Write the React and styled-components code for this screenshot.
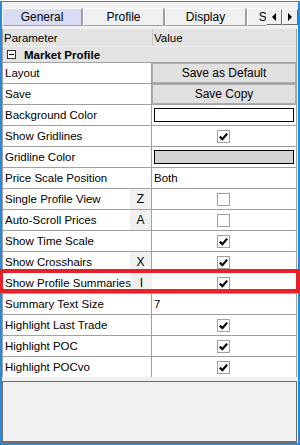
import React from "react";
import styled, { createGlobalStyle } from "styled-components";

const GlobalStyle = createGlobalStyle`
  html, body {
    margin: 0;
    padding: 0;
    background: #ffffff;
  }
  body {
    font-family: "Liberation Sans", Arial, sans-serif;
    font-size: 11.5px;
    color: #000000;
  }
`;

const rows = [
  { name: "Layout", kind: "button", value: "Save as Default" },
  { name: "Save", kind: "button", value: "Save Copy" },
  { name: "Background Color", kind: "color", value: "#ffffff" },
  { name: "Show Gridlines", kind: "check", value: true },
  { name: "Gridline Color", kind: "color", value: "#d4d4d4" },
  { name: "Price Scale Position", kind: "text", value: "Both" },
  { name: "Single Profile View", key: "Z", kind: "check", value: false },
  { name: "Auto-Scroll Prices", key: "A", kind: "check", value: false },
  { name: "Show Time Scale", kind: "check", value: true },
  { name: "Show Crosshairs", key: "X", kind: "check", value: true },
  { name: "Show Profile Summaries", key: "I", kind: "check", value: true },
  { name: "Summary Text Size", kind: "text", value: "7" },
  { name: "Highlight Last Trade", kind: "check", value: true },
  { name: "Highlight POC", kind: "check", value: true },
  { name: "Highlight POCvo", kind: "check", value: true },
];

const tabs = [
  { label: "General", width: 81, active: true },
  { label: "Profile", width: 82 },
  { label: "Display", width: 82 },
  { label: "Summary", width: 76 },
];

export default function App() {
  return (
    <>
      <GlobalStyle />
      <Window>
        <TabBar>
          <TabStrip>
            {tabs.map((t) => (
              <Tab key={t.label} $w={t.width} $active={t.active}>
                {t.label}
              </Tab>
            ))}
          </TabStrip>
          <ScrollButtons>
            <ArrowButton>
              <svg width="6" height="8" viewBox="0 0 6 8">
                <path d="M5 0 L1 4 L5 8 Z" fill="#000" />
              </svg>
            </ArrowButton>
            <ArrowButton>
              <svg width="6" height="8" viewBox="0 0 6 8">
                <path d="M1 0 L5 4 L1 8 Z" fill="#000" />
              </svg>
            </ArrowButton>
          </ScrollButtons>
        </TabBar>

        <Grid>
          <HeaderRow>
            <HeaderCell>Parameter</HeaderCell>
            <HeaderCell $value>Value</HeaderCell>
          </HeaderRow>
          <CategoryRow>
            <Collapse>
              <svg width="9" height="9" viewBox="0 0 9 9">
                <rect x="0.5" y="0.5" width="8" height="8" fill="#fff" stroke="#333" />
                <path d="M2 4.5 H7" stroke="#000" />
              </svg>
            </Collapse>
            Market Profile
          </CategoryRow>
          {rows.map((r) => (
            <Row key={r.name}>
              <NameCell>
                <Name>{r.name}</Name>
                {r.key && <KeyCell>{r.key}</KeyCell>}
              </NameCell>
              <ValueCell $center={r.kind === "check"}>
                {r.kind === "button" && <CellButton>{r.value}</CellButton>}
                {r.kind === "color" && <Swatch $color={r.value} />}
                {r.kind === "text" && <ValueText>{r.value}</ValueText>}
                {r.kind === "check" && (
                  <CheckBox>
                    {r.value && (
                      <svg width="9" height="9" viewBox="0 0 9 9">
                        <path
                          d="M0.8 4.6 L3.4 7.2 L8.2 1.6"
                          stroke="#000"
                          strokeWidth="2.2"
                          fill="none"
                        />
                      </svg>
                    )}
                  </CheckBox>
                )}
              </ValueCell>
            </Row>
          ))}
        </Grid>

        <Description />
        <Highlight />
      </Window>
    </>
  );
}

const Window = styled.div`
  position: relative;
  box-sizing: border-box;
  width: 300px;
  height: 444px;
  margin-top: 1px;
  border: 2px solid #2b89d6;
  border-top-width: 1px;
  background: #f0f0f0;
  display: flex;
  flex-direction: column;
`;

const TabBar = styled.div`
  display: flex;
  height: 18px;
  margin-top: 6px;
`;

const TabStrip = styled.div`
  flex: 1;
  display: flex;
  overflow: hidden;
`;

const Tab = styled.div`
  flex: 0 0 ${(p) => p.$w}px;
  box-sizing: border-box;
  height: 18px;
  display: flex;
  align-items: center;
  justify-content: center;
  font-size: 12px;
  background: ${(p) => (p.$active ? "#dadcf3" : "#f0f0f0")};
  border-top: 1px solid #ffffff;
  border-left: 1px solid #ffffff;
  border-right: 2px solid #a0a0a0;
  border-bottom: 1px solid #a0a0a0;
  color: #000;
`;

const ScrollButtons = styled.div`
  display: flex;
  padding-top: 1px;
`;

const ArrowButton = styled.div`
  box-sizing: border-box;
  width: 16px;
  height: 16px;
  display: flex;
  align-items: center;
  justify-content: center;
  background: #f0f0f0;
  border-top: 1px solid #ffffff;
  border-left: 1px solid #ffffff;
  border-right: 1px solid #696969;
  border-bottom: 1px solid #696969;
`;

const Grid = styled.div`
  margin-top: 3px;
  margin-right: 1px;
  background: #ffffff;
  border-left: 1px solid #a0a0a0;
  border-right: 1px solid #a0a0a0;
  display: flex;
  flex-direction: column;
`;

const HeaderRow = styled.div`
  display: grid;
  grid-template-columns: 149px 1fr;
  height: 17px;
  background: #e3e3e3;
  border-bottom: 1px solid #f0f0f0;
`;

const HeaderCell = styled.div`
  display: flex;
  align-items: center;
  padding-left: 1px;
  border-left: ${(p) => (p.$value ? "1px solid #c8c8c8" : "none")};
`;

const CategoryRow = styled.div`
  height: 15px;
  display: flex;
  align-items: center;
  background: #e3e3e3;
  font-weight: bold;
`;

const Collapse = styled.span`
  display: flex;
  margin: 0 8px 0 4px;
`;

const Row = styled.div`
  display: grid;
  grid-template-columns: 149px 1fr;
  height: 21px;
  box-sizing: border-box;
  border-top: 1px solid #a0a0a0;
`;

const NameCell = styled.div`
  display: flex;
  align-items: stretch;
  border-right: 1px solid #a0a0a0;
`;

const Name = styled.div`
  flex: 1;
  display: flex;
  align-items: center;
  padding-left: 2px;
  white-space: nowrap;
`;

const KeyCell = styled.div`
  flex: 0 0 21px;
  display: flex;
  align-items: center;
  justify-content: center;
  font-size: 12px;
  background: #f0f0f0;
`;

const ValueCell = styled.div`
  display: flex;
  align-items: center;
  justify-content: ${(p) => (p.$center ? "center" : "flex-start")};
`;

const CellButton = styled.div`
  box-sizing: border-box;
  width: 100%;
  height: 100%;
  display: flex;
  align-items: center;
  justify-content: center;
  font-size: 12px;
  background: #e1e1e1;
  border: 1px solid #adadad;
`;

const Swatch = styled.div`
  box-sizing: border-box;
  width: calc(100% - 4px);
  height: 14px;
  margin-left: 2px;
  background: ${(p) => p.$color};
  border: 1px solid #000;
`;

const ValueText = styled.span`
  padding-left: 2px;
`;

const CheckBox = styled.div`
  box-sizing: border-box;
  width: 13px;
  height: 13px;
  display: flex;
  align-items: center;
  justify-content: center;
  background: #fff;
  border: 1px solid #a0a0a0;
  margin-left: -1px;
`;

const Description = styled.div`
  margin: 4px 1px 0 0;
  flex: 1;
  background: #f0f0f0;
  border: 1px solid #6e6e6e;
  border-bottom-width: 2px;
`;

const Highlight = styled.div`
  position: absolute;
  left: -2px;
  top: 267px;
  width: 300px;
  height: 24px;
  box-sizing: border-box;
  border: 4px solid #e8202a;
  border-left-width: 3px;
  pointer-events: none;
`;
